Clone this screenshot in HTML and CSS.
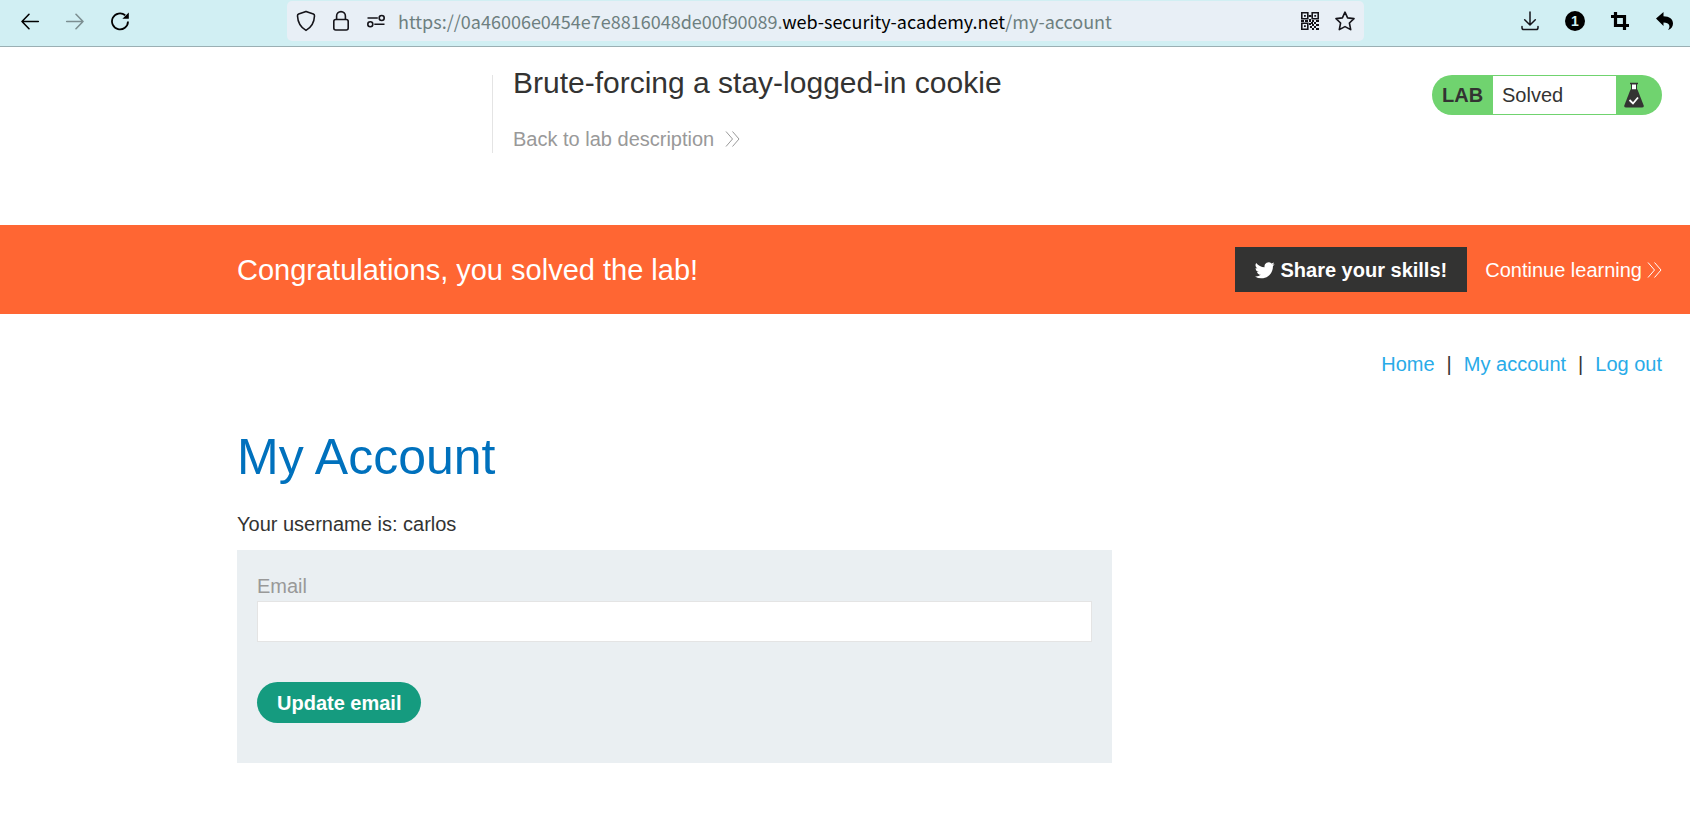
FILE: index.html
```html
<!DOCTYPE html>
<html lang="en">
<head>
<meta charset="utf-8">
<title>Brute-forcing a stay-logged-in cookie</title>
<link rel="stylesheet" href="styles.css">
</head>
<body>
<div class="toolbar">
  <div class="toolbar-nav">
    <button class="icon-btn" type="button" aria-label="Back"><svg width="20" height="20" viewBox="0 0 20 20" fill="none" stroke="#000" stroke-width="1.6" stroke-linecap="round" stroke-linejoin="round"><path d="M18.300 10.500H2M9 3.300 2 10.500l7 7.200"/></svg></button>
    <button class="icon-btn faded" type="button" aria-label="Forward" disabled><svg width="20" height="20" viewBox="0 0 20 20" fill="none" stroke="#000" stroke-width="1.6" stroke-linecap="round" stroke-linejoin="round"><path d="M1.700 10.500H18M11 3.300 18 10.500l-7 7.200"/></svg></button>
    <button class="icon-btn" type="button" aria-label="Reload"><svg width="20" height="20" viewBox="0 0 20 20" fill="none" stroke="#000" stroke-width="1.800"><path d="M15.200 4.300A8 8 0 1 0 18 10.500"/><path d="M18.800 1.500v6.200h-6.400z" fill="#000" stroke="none"/></svg></button>
  </div>
  <div class="url-bar">
    <div class="url-icons">
      <button class="icon-btn" type="button" aria-label="Tracking protection"><svg width="20" height="22" viewBox="0 0 20 22" fill="none" stroke="#15141a" stroke-width="1.600" stroke-linejoin="round"><path d="M10 1.400 2.600 4.100Q1.400 4.600 1.500 6C1.800 12.500 4.500 17.300 10 20.400c5.500-3.100 8.200-7.900 8.500-14.400q.1-1.400-1.100-1.900z"/></svg></button>
      <button class="icon-btn" type="button" aria-label="Connection secure"><svg width="20" height="22" viewBox="0 0 20 22" fill="none" stroke="#15141a" stroke-width="1.600"><rect x="2.800" y="9.500" width="14.400" height="10.500" rx="2"/><path d="M5.600 9.500V6a4.400 4.400 0 0 1 8.800 0v3.500"/></svg></button>
      <button class="icon-btn" type="button" aria-label="Permissions"><svg width="20" height="22" viewBox="0 0 20 22" fill="none" stroke="#15141a" stroke-width="1.600"><path d="M1.500 8h10.300M8.300 14.200h10.200"/><circle cx="15.700" cy="8" r="2.500"/><circle cx="4.300" cy="14.200" r="2.500"/></svg></button>
    </div>
    <div class="url" role="textbox" aria-label="Address" tabindex="0">https://0a46006e0454e7e8816048de00f90089.<span class="url-domain">web-security-academy.net</span>/my-account</div>
    <div class="url-icons">
      <button class="icon-btn" type="button" aria-label="QR code"><svg width="20" height="20" viewBox="0 0 20 20" fill="none" stroke="#15141a" stroke-width="1.600"><path d="M1.800 1.800h6v6h-6zM12.200 1.800h6v6h-6zM1.800 12.200h6v6h-6z"/><path fill="#15141a" stroke="none" d="M4 4h1.800v1.800H4zM14.300 4h1.800v1.800h-1.800zM4 14.300h1.800v1.800H4zM8.600 4h2.800v2H8.600zM1 9h3v2H1zM5 9h3v2H5zM9 8h2v3H9zM12 9h2v2h-2zM16 9h3v2h-3zM9 12h2v2H9zM11 11h2v2h-2zM14 11h2v2h-2zM12 13h2v2h-2zM16 13h3v2h-3zM10 15h2v2h-2zM14 15h2v2h-2zM12 17h2v2h-2zM16 17h3v2h-3z"/></svg></button>
      <button class="icon-btn" type="button" aria-label="Bookmark"><svg width="20" height="20" viewBox="0 0 20 20" fill="none" stroke="#15141a" stroke-width="1.600" stroke-linejoin="round"><path d="M10 1.200 12.600 6.900 19 7.600 14.400 12 15.700 18.600 10 15.600 4.300 18.600 5.600 12 1 7.600 7.400 6.900z"/></svg></button>
    </div>
  </div>
  <div class="toolbar-actions">
    <button class="icon-btn" type="button" aria-label="Downloads"><svg width="20" height="20" viewBox="0 0 20 20" fill="none" stroke="#15141a" stroke-width="1.500" stroke-linecap="round" stroke-linejoin="round"><path d="M10 1v13M4.700 8.800 10 14l5.300-5.200M2 15.500v1.200q0 1.800 1.800 1.800h12.400q1.800 0 1.800-1.800v-1.200"/></svg></button>
    <button class="icon-btn badge" type="button">1</button>
    <button class="icon-btn" type="button" aria-label="Crop"><svg width="20" height="20" viewBox="0 0 20 20" fill="none" stroke="#000" stroke-width="3.200"><path d="M1 5.500h13.500V19M5.500 1v13.500H19"/></svg></button>
    <button class="icon-btn" type="button" aria-label="Undo"><svg width="20" height="20" viewBox="0 0 20 20"><path d="M1 7.500 8.500 1v4.200c6 0 9.500 3 9.500 7.300 0 3-1.600 5.300-5 6.500 2.700-3.400 1.800-7.500-4.500-7.600v3.500z"/></svg></button>
  </div>
</div>

<header class="lab-header">
  <div class="lab-title">
    <h2>Brute-forcing a stay-logged-in cookie</h2>
    <a class="back-link" href="#">Back to lab description <svg width="16" height="18" viewBox="0 0 16 18" fill="none" stroke="currentColor"><path d="M2 1.500 8.500 9 2 16.500M8.500 1.500 15 9l-6.500 7.500"/></svg></a>
  </div>
  <div class="lab-status">
    <span class="lab-tag">LAB</span>
    <span class="lab-state">Solved</span>
    <svg class="flask" width="22" height="26" viewBox="0 0 22 26"><path d="M7 1.500h8" stroke="#333332" stroke-width="1.500"/><path d="M8.500 2h5v6h-5z" fill="#fff" stroke="#333332"/><path d="M7.500 7.500h7l6.200 16q.6 2-1.500 2H2.800q-2.100 0-1.500-2z" fill="#333332"/><path d="m6.500 18 3.500 3.500 5-6" fill="none" stroke="#fff" stroke-width="1.800"/></svg>
  </div>
</header>

<section class="banner">
  <h3>Congratulations, you solved the lab!</h3>
  <div class="banner-links">
    <button class="share" type="button"><svg width="20" height="20" viewBox="0 0 24 24" fill="#fff"><path d="M23.600 4.900a9.700 9.700 0 0 1-2.800.8 4.900 4.900 0 0 0 2.100-2.700 9.700 9.700 0 0 1-3.100 1.200 4.900 4.900 0 0 0-8.300 4.500A13.900 13.900 0 0 1 1.400 3.600a4.900 4.900 0 0 0 1.500 6.500 4.900 4.900 0 0 1-2.200-.6 4.900 4.900 0 0 0 3.900 4.800 4.900 4.900 0 0 1-2.200.1 4.900 4.900 0 0 0 4.600 3.400A9.800 9.800 0 0 1 0 19.800a13.900 13.900 0 0 0 7.500 2.200c9.100 0 14.300-7.700 14-14.600a10 10 0 0 0 2.100-2.500z"/></svg>Share your skills!</button>
    <a class="continue" href="#">Continue learning<svg width="16" height="18" viewBox="0 0 16 18" fill="none" stroke="currentColor"><path d="M2 1.500 8.500 9 2 16.500M8.500 1.500 15 9l-6.500 7.500"/></svg></a>
  </div>
</section>

<main class="account">
  <nav class="top-links">
    <a href="#">Home</a><span>|</span><a href="#">My account</a><span>|</span><a href="#">Log out</a>
  </nav>
  <h1>My Account</h1>
  <p>Your username is: carlos</p>
  <form class="email-form">
    <label for="email">Email</label>
    <input id="email" type="email" name="email">
    <button type="button">Update email</button>
  </form>
</main>
</body>
</html>
```
FILE: styles.css
```css
* { box-sizing: border-box; }

body {
  margin: 0;
  background: #fff;
  color: #333332;
  font: 20px/24px "Liberation Sans", Arial, sans-serif;
}

h1, h2, h3, p { margin: 0; font-weight: 400; }
a { text-decoration: none; }
button { font: inherit; cursor: pointer; }
svg { display: block; flex: none; }

/* Browser toolbar */
.toolbar {
  display: flex;
  justify-content: space-between;
  height: 47px;
  padding: 1px 15px 5px 20px;
  background: #d1eff3;
  border-bottom: 1px solid #9aafb3;
}

.toolbar-nav, .toolbar-actions, .url-icons {
  display: flex;
  align-items: center;
}

.toolbar-nav, .toolbar-actions { gap: 25px; }

.icon-btn {
  display: flex;
  align-items: center;
  justify-content: center;
  width: 20px;
  height: 24px;
  padding: 0;
  border: 0;
  background: none;
}

.faded { opacity: 0.4; }

.badge {
  height: 20px;
  border-radius: 50%;
  background: #000;
  color: #d1eff3;
  font-size: 14px;
  font-weight: 700;
  line-height: 20px;
}

.url-bar {
  display: flex;
  align-items: center;
  flex: 1;
  margin: 0 156px 0 157px;
  padding: 0 9px;
  border-radius: 5px;
  background: #e8eff6;
}

.url-icons { gap: 15px; }

.url {
  flex: 1;
  padding-left: 12px;
  color: #6e7f80;
  font: 18px/24px "Noto Sans CJK SC", sans-serif;
  white-space: nowrap;
}

.url-domain { color: #000; }

/* Lab header */
.lab-header {
  display: flex;
  justify-content: space-between;
  align-items: flex-start;
  padding: 28px 28px 72px 492px;
}

.lab-title {
  height: 78px;
  padding-left: 20px;
  border-left: 1px solid #e4e4e4;
}

.lab-title h2 {
  margin-top: -10px;
  font-size: 30px;
  line-height: 36px;
}

.back-link {
  display: flex;
  align-items: center;
  gap: 10px;
  margin-top: 26px;
  color: #999;
}

.lab-status {
  display: flex;
  align-items: center;
  width: 230px;
  height: 40px;
  padding: 1px 17px 1px 10px;
  border-radius: 20px;
  background: #70d36f;
}

.lab-tag { width: 51px; font-weight: 700; }

.lab-state {
  flex: 1;
  height: 38px;
  margin-right: 7px;
  padding-left: 9px;
  background: #fff;
  line-height: 38px;
}

/* Solved banner */
.banner {
  display: flex;
  align-items: center;
  justify-content: space-between;
  padding: 22px 28px 22px 237px;
  background: #ff6633;
  color: #fff;
}

.banner h3 { font-size: 29px; line-height: 36px; }

.banner-links { display: flex; align-items: center; gap: 18px; }

.share {
  display: flex;
  align-items: center;
  gap: 5px;
  height: 45px;
  padding: 0 20px;
  border: 0;
  background: #333332;
  color: #fff;
  font-weight: 700;
}

.continue {
  display: flex;
  align-items: center;
  gap: 4px;
  color: #fff;
}

/* Account page */
.account { padding: 38px 28px 60px 237px; }

.top-links {
  display: flex;
  justify-content: flex-end;
  gap: 12px;
}

.top-links a { color: #29abe8; }

.account h1 {
  margin-top: 51px;
  color: #0071bd;
  font-size: 50px;
  line-height: 60px;
}

.account p { margin-top: 25px; }

.email-form {
  display: flex;
  flex-direction: column;
  align-items: flex-start;
  max-width: 875px;
  margin-top: 14px;
  padding: 24px 20px 40px;
  background: #eaeff2;
}

.email-form label { color: #999; }

.email-form input {
  width: 100%;
  height: 41px;
  margin-top: 3px;
  padding: 0 8px;
  border: 1px solid #e4e4e4;
  background: #fff;
  font: inherit;
}

.email-form button {
  height: 41px;
  margin-top: 40px;
  padding: 0 20px;
  border: 0;
  border-radius: 21px;
  background: #159b7f;
  color: #fff;
  font-weight: 700;
}
```
